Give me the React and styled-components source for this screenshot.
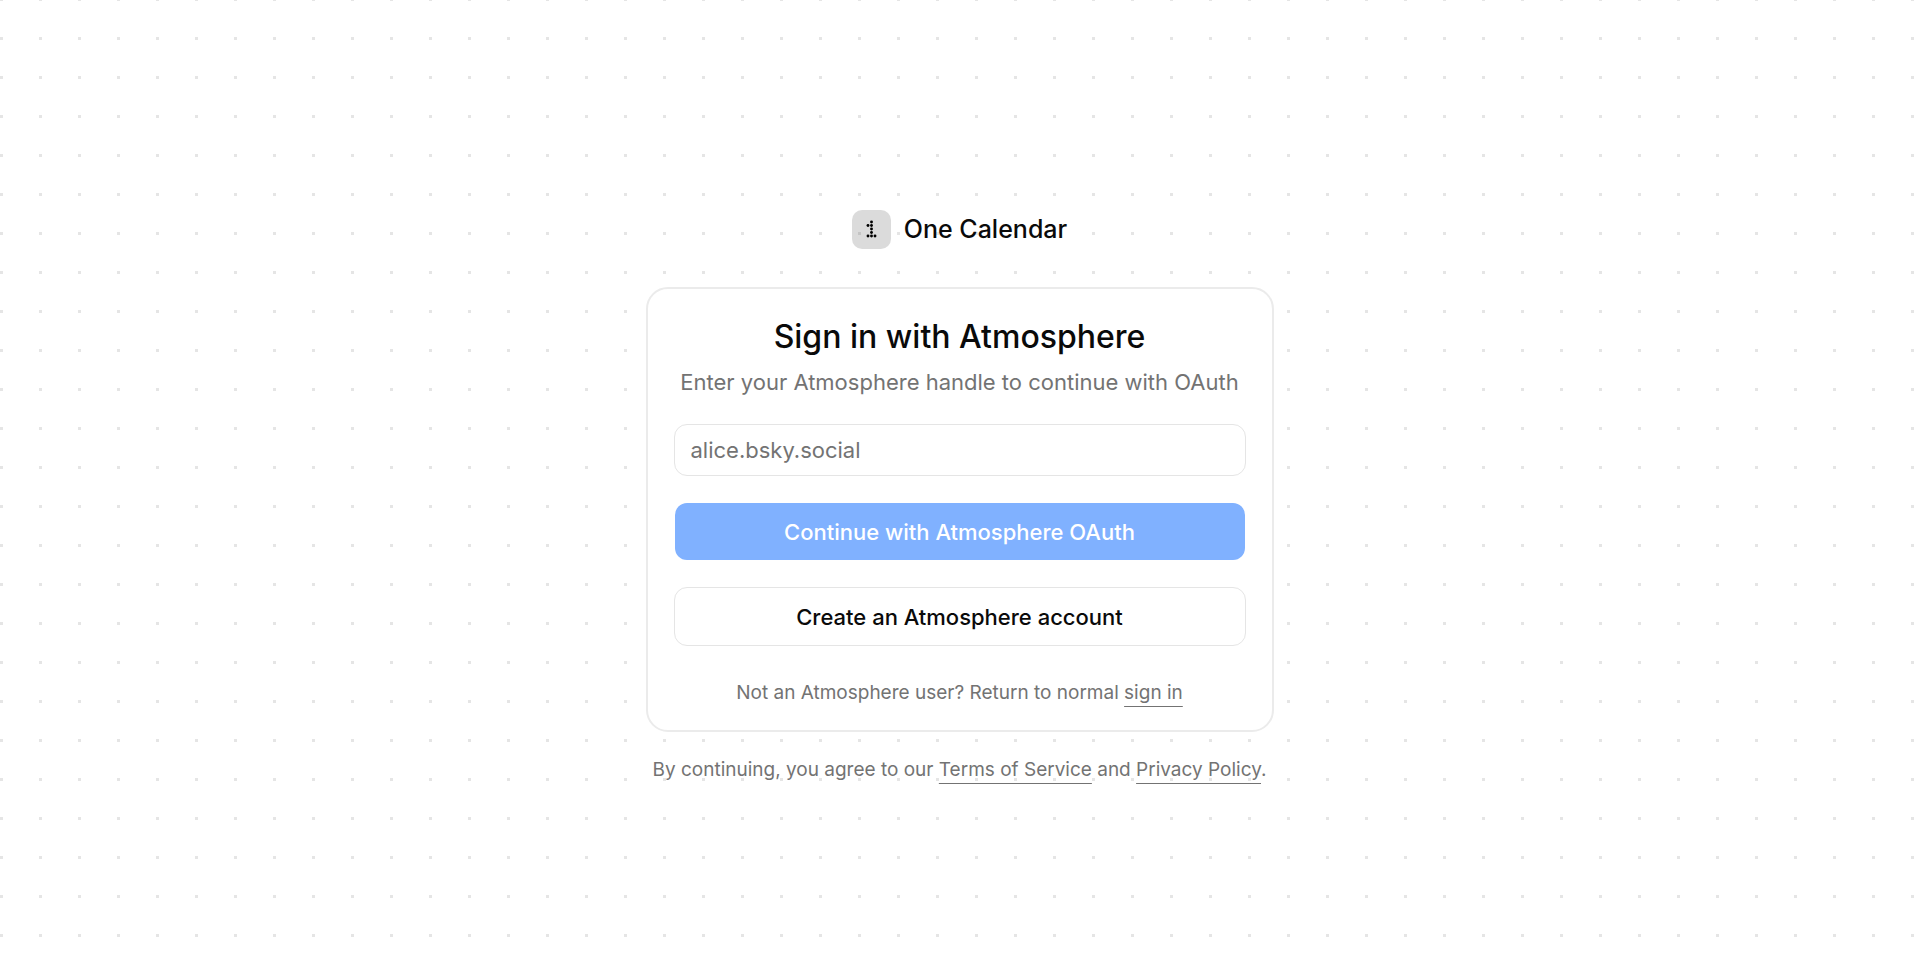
import React from "react";
import styled, { createGlobalStyle } from "styled-components";

const GlobalStyle = createGlobalStyle`
  *, *::before, *::after {
    box-sizing: border-box;
  }

  body {
    margin: 0;
    color: #0a0a0a;
    background-color: #fff;
    font-family: Inter, "Liberation Sans", sans-serif;
  }

  h1, p {
    margin: 0;
  }
`;

const Page = styled.main`
  display: flex;
  flex-direction: column;
  align-items: center;
  justify-content: center;
  min-height: 100vh;
  padding: 62px 32px 32px;
  background-image: conic-gradient(
    from 90deg at calc(100% - 3px) calc(100% - 3px),
    #e5e5e5 90deg,
    transparent 0
  );
  background-size: 39px 39px;
  background-position: 3px 1px;
`;

const Column = styled.div`
  display: flex;
  flex-direction: column;
  gap: 38px;
  width: 100%;
  max-width: 628px;
`;

const Brand = styled.a`
  display: flex;
  align-items: center;
  align-self: center;
  gap: 13px;
  color: inherit;
  font-size: 25px;
  font-weight: 500;
  line-height: 39px;
  text-decoration: none;
`;

const LogoBox = styled.span`
  display: grid;
  place-items: center;
  width: 39px;
  height: 39px;
  border-radius: 10px;
  background: rgba(0, 0, 0, 0.14);
`;

const Body = styled.div`
  display: flex;
  flex-direction: column;
  gap: 24px;
`;

const Card = styled.section`
  padding: 27px 26px 23px;
  border: 2px solid #ebebeb;
  border-radius: 22px;
  background: #fff;
`;

const Header = styled.header`
  display: flex;
  flex-direction: column;
  gap: 6px;
  margin-bottom: 24px;
  text-align: center;
`;

const Title = styled.h1`
  font-size: 32px;
  font-weight: 500;
  line-height: 42px;
`;

const Subtitle = styled.p`
  color: #737373;
  font-size: 22px;
  line-height: 36px;
`;

const Form = styled.form`
  display: flex;
  flex-direction: column;
  gap: 26px;
`;

const HandleInput = styled.input`
  width: 100%;
  height: 52px;
  padding: 0 16px;
  border: 1px solid #e5e5e5;
  border-radius: 13px;
  background: transparent;
  color: inherit;
  font: inherit;
  font-size: 22px;

  &::placeholder {
    color: #737373;
    opacity: 1;
  }
`;

const Button = styled.button`
  height: 59px;
  border: 1px solid ${(props) => (props.$primary ? "transparent" : "#e5e5e5")};
  border-radius: 13px;
  background: ${(props) => (props.$primary ? "#80b1ff" : "#fff")};
  background-clip: padding-box;
  color: ${(props) => (props.$primary ? "#fff" : "#0a0a0a")};
  font: inherit;
  font-size: 22px;
  font-weight: 500;
`;

const Note = styled.p`
  color: #737373;
  font-size: 19px;
  line-height: 28px;
  text-align: center;
`;

const CardNote = styled(Note)`
  margin-top: 33px;
`;

const TextLink = styled.a`
  color: inherit;
  text-decoration: underline;
  text-decoration-thickness: 1px;
  text-underline-offset: 7px;
  text-decoration-skip-ink: none;
`;

const logoDots = [
  [5.5, 2],
  [2, 5.5],
  [5.5, 5.5],
  [5.5, 9],
  [5.5, 12.5],
  [2, 16],
  [5.5, 16],
  [9, 16],
];

const Logo = () => (
  <LogoBox>
    <svg width="11" height="19" viewBox="0 0 11 19" aria-hidden="true">
      {logoDots.map(([x, y]) => (
        <circle key={`${x}-${y}`} cx={x} cy={y} r="1.45" />
      ))}
    </svg>
  </LogoBox>
);

const App = () => {
  return (
    <>
      <GlobalStyle />
      <Page>
        <Column>
          <Brand href="#">
            <Logo />
            One Calendar
          </Brand>
          <Body>
            <Card>
              <Header>
                <Title>Sign in with Atmosphere</Title>
                <Subtitle>
                  Enter your Atmosphere handle to continue with OAuth
                </Subtitle>
              </Header>
              <Form onSubmit={(e) => e.preventDefault()}>
                <HandleInput
                  type="text"
                  aria-label="Atmosphere handle"
                  placeholder="alice.bsky.social"
                />
                <Button type="submit" $primary disabled>
                  Continue with Atmosphere OAuth
                </Button>
                <Button type="button">Create an Atmosphere account</Button>
              </Form>
              <CardNote>
                Not an Atmosphere user? Return to normal{" "}
                <TextLink href="#">sign in</TextLink>
              </CardNote>
            </Card>
            <Note>
              By continuing, you agree to our{" "}
              <TextLink href="#">Terms of Service</TextLink> and{" "}
              <TextLink href="#">Privacy Policy</TextLink>.
            </Note>
          </Body>
        </Column>
      </Page>
    </>
  );
};

export default App;
